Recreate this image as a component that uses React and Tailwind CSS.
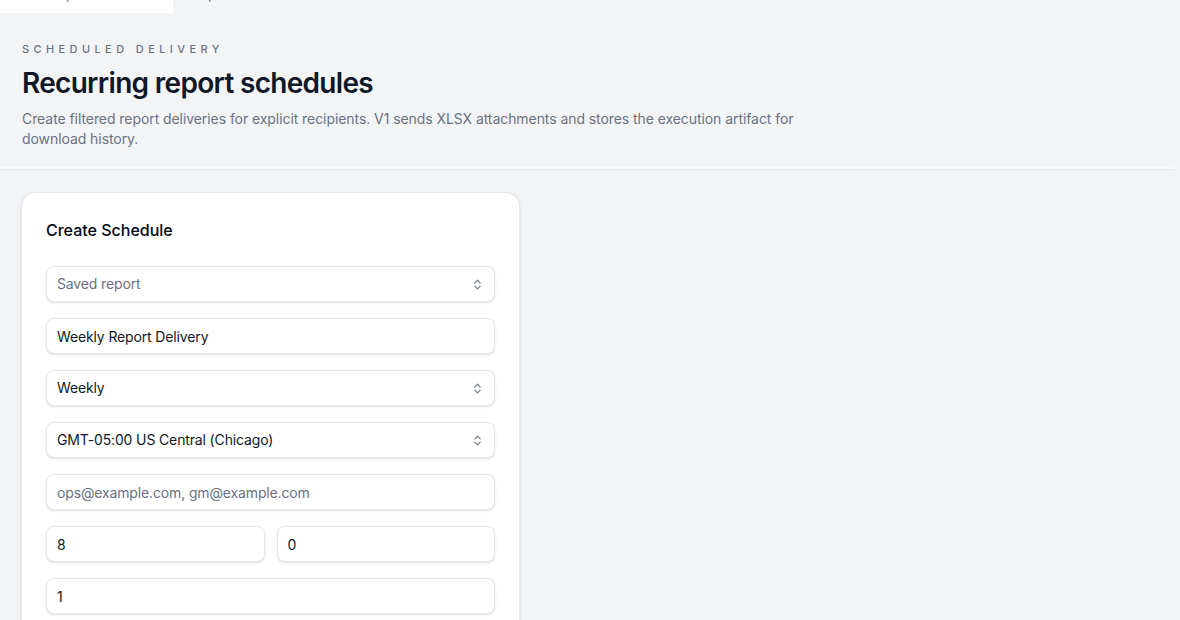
import { ChevronsUpDown } from "lucide-react";

const inputBase =
  "h-9 w-full rounded-lg border border-gray-200 bg-white px-[10px] text-sm tracking-[-0.01em] text-gray-900 shadow-sm outline-none placeholder:text-gray-500";

function SelectField({ value, placeholder }) {
  return (
    <div className={`${inputBase} flex items-center justify-between`}>
      <span className={value ? "text-gray-900" : "text-gray-500"}>
        {value || placeholder}
      </span>
      <ChevronsUpDown size={13} strokeWidth={2} className="text-gray-500" />
    </div>
  );
}

function TextField({ value, placeholder }) {
  return (
    <input
      className={inputBase}
      defaultValue={value}
      placeholder={placeholder}
      readOnly
    />
  );
}

export default function App() {
  return (
    <div
      className="min-h-[620px] overflow-hidden bg-gray-100"
      style={{ fontFamily: "Inter, 'Noto Sans', sans-serif" }}
    >
      {/* tab strip, scrolled mostly out of view */}
      <div className="flex h-[13px] items-start overflow-hidden">
        <div className="flex h-[13px] w-[173px] items-start justify-between overflow-hidden bg-white px-[8px]">
          <span className="mt-[-16px] text-sm leading-5 text-gray-500">Saved reports</span>
          <span className="mt-[-16px] text-sm leading-5 text-gray-400">12</span>
        </div>
        <span className="ml-[18px] mt-[-16px] text-sm leading-5 text-gray-500">Reports</span>
      </div>

      <header className="mr-[6px] border-b border-gray-200 px-[22px] pb-5 pt-7 shadow-[0_-2px_0_0_#f9fafb_inset]">
        <p className="text-[11px] font-medium uppercase leading-4 tracking-[0.4em] text-gray-500">
          Scheduled delivery
        </p>
        <h1 className="mt-2 text-[28px] font-semibold leading-9 tracking-tight text-gray-900">
          Recurring report schedules
        </h1>
        <p className="mt-2 max-w-[780px] text-sm leading-5 tracking-[-0.005em] text-gray-500">
          Create filtered report deliveries for explicit recipients. V1 sends XLSX attachments and
          stores the execution artifact for download history.
        </p>
      </header>

      <main className="px-[21px] pt-[22px]">
        <section className="w-[499px] rounded-[14px] border border-gray-200 bg-white px-6 pb-6 pt-[25px] shadow-sm">
          <h2 className="text-base font-medium leading-6 text-gray-950">Create Schedule</h2>
          <div className="mt-6 flex flex-col gap-4">
            <SelectField placeholder="Saved report" />
            <TextField value="Weekly Report Delivery" />
            <SelectField value="Weekly" />
            <SelectField value="GMT-05:00 US Central (Chicago)" />
            <TextField placeholder="ops@example.com, gm@example.com" />
            <div className="grid grid-cols-2 gap-3">
              <TextField value="8" />
              <TextField value="0" />
            </div>
            <TextField value="1" />
            <TextField value="" placeholder="" />
          </div>
        </section>
      </main>
    </div>
  );
}
